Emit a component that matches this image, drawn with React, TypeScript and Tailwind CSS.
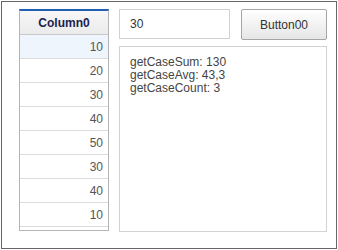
import React from "react";

const values = [10, 20, 30, 40, 50, 30, 40, 10];

const App = () => {
	return (
		<div className="w-[338px] h-[250px] bg-white pl-px pt-px font-['Liberation_Sans',Arial,sans-serif]">
			<div className="w-[336px] h-[248px] border border-[#666] flex gap-[10px] pl-[17px] pt-[7px]">
				{/* grid */}
				<div className="w-[90px] h-[222px] border-x border-b border-[#b5b5b5] border-t-2 border-t-[#1f5fb5] flex flex-col">
					<div className="h-[24px] shrink-0 flex items-center justify-center bg-gradient-to-b from-[#f7f7f7] to-[#ebebeb] border-b border-[#c8c8c8] text-[12px] font-bold text-[#1e1e50]">
						Column0
					</div>
					{values.map((v, i) => (
						<div
							key={i}
							className={`h-[24px] shrink-0 flex items-center justify-end pr-[5px] border-b border-[#dcdcdc] text-[12px] text-[#555] ${i === 0 ? "bg-[#eef5fd]" : "bg-white"}`}
						>
							{v}
						</div>
					))}
				</div>

				{/* right side */}
				<div className="flex flex-col gap-[6px]">
					<div className="flex gap-[11px]">
						<div className="w-[111px] h-[30px] border border-[#d2d2d2] flex items-center pl-[10px] text-[12px] text-[#333]">
							30
						</div>
						<button className="w-[86px] h-[31px] border border-[#a5a5a5] rounded-[2px] bg-gradient-to-b from-[#ffffff] to-[#e6e6e6] text-[12px] text-[#333]">
							Button00
						</button>
					</div>
					<div className="w-[208px] h-[186px] border border-[#d2d2d2] pl-[10px] pt-[9px] text-[12px] leading-[13px] text-[#444]">
						<div>getCaseSum: 130</div>
						<div>getCaseAvg: 43,3</div>
						<div>getCaseCount: 3</div>
					</div>
				</div>
			</div>
		</div>
	);
};

export default App;
